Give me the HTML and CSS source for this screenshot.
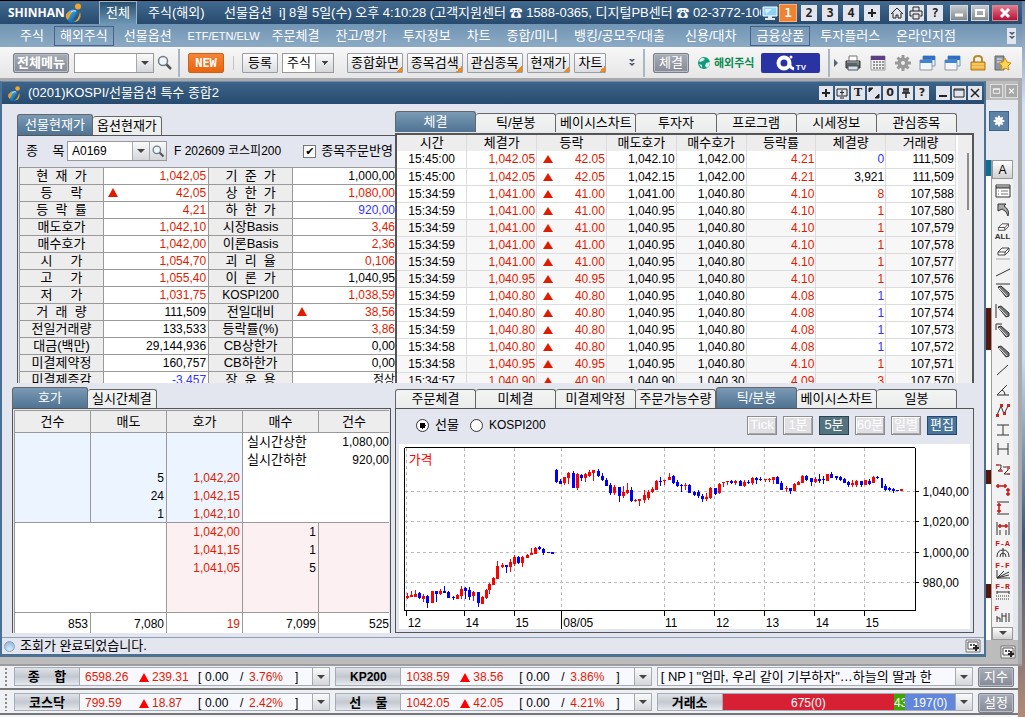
FILE: index.html
```html
<!DOCTYPE html>
<html lang="ko">
<head>
<meta charset="utf-8">
<title>SHINHAN i</title>
<link rel="stylesheet" href="styles.css">
</head>
<body>
<svg class="defs" aria-hidden="true">
  <defs>
    <linearGradient id="gBlue" x1="0" y1="0" x2="1" y2="1"><stop offset="0" stop-color="#7fd0f5"/><stop offset=".5" stop-color="#1e7fc4"/><stop offset="1" stop-color="#063a74"/></linearGradient>
    <symbol id="logo-i" viewBox="0 0 18 22">
      <circle cx="13" cy="4.500" r="3" fill="#f0a52c"/>
      <path d="M2 11Q6 6 11 8q3 1 1 4l-3 5q0 2 5 0-3 5-8 4-4-1-2-5l2-4q0-2-4-1z" fill="url(#gBlue)"/>
      <path d="M1 12q3-3 6-2l-4 8Q0 16 1 12zM15 10q2 5-2 9-2 1-5 1 5-1 7-10z" fill="#d9a63b"/>
      <path d="M6 10q3-2 5-1" stroke="#dff4ff" fill="none"/>
    </symbol>
    <symbol id="plus" viewBox="0 0 14 14"><path d="M7 3v8M3 7h8" stroke="#222" stroke-width="2"/></symbol>
    <symbol id="mag" viewBox="0 0 18 18"><circle cx="7" cy="7" r="4.500" fill="#eef6fb" stroke="#6d7a8a" stroke-width="1.500"/><path d="M10.500 10.500L15 15" stroke="#555" stroke-width="2.500"/></symbol>
    <symbol id="chev" viewBox="0 0 8 10"><path d="M1 1h2l1 1 1-1h2L4 4zM1 5h2l1 1 1-1h2L4 8z" fill="#41506a"/></symbol>
    <symbol id="min" viewBox="0 0 14 14"><path d="M3 10h8" stroke="#222" stroke-width="2"/></symbol>
    <symbol id="max" viewBox="0 0 14 14"><path d="M2 3h10v8H2zM2 4h10" stroke="#222" fill="none"/></symbol>
    <symbol id="close" viewBox="0 0 14 14"><path d="M3 3l8 8M11 3l-8 8" stroke="#222" stroke-width="1.500"/></symbol>
    <symbol id="printer" viewBox="0 0 18 18"><path d="M5 2h8v6H5z" fill="#fff" stroke="#777"/><path d="M2 7h14v7H2z" fill="#5b6268" stroke="#333"/><path d="M3 8h12" stroke="#aeb7bd"/><path d="M4 12h10v4H4z" fill="#cfe5f2" stroke="#555"/><path d="M13 10h2" stroke="#59d06c"/></symbol>
    <symbol id="wins" viewBox="0 0 18 18"><path d="M4 2h12v10H4z" fill="#e9f2fa" stroke="#7893b0"/><path d="M4 2h12v4H4z" fill="#2c6fc4"/><path d="M1 6h12v10H1z" fill="#f4f5f7" stroke="#8a97a6"/><path d="M1 6h12v3H1z" fill="#3d83d6"/></symbol>
    <symbol id="gear" viewBox="0 0 18 18"><g stroke="currentColor" stroke-width="3"><path d="M9 1v16M1 9h16M3.500 3.500l11 11M14.500 3.500l-11 11"/></g><circle cx="9" cy="9" r="5.500" fill="currentColor"/><circle class="hub" cx="9" cy="9" r="2"/></symbol>
    <symbol id="addwin" viewBox="0 0 16 14"><path d="M1 1h14v12H1z" fill="#eee" stroke="#777"/><path d="M3 3h10v7H3z" fill="#fff" stroke="#555"/><path d="M5 5h2v2H5zM8 5h2v2H8z" fill="#555"/><path d="M11 6v6M8 9h6" stroke="#222" stroke-width="2"/></symbol>
    <symbol id="pen" viewBox="0 0 16 16"><path d="M3 4l3-1 8 7v3l-3 1z" fill="#777" stroke="#333"/><path d="M4 5l8 8" stroke="#ddd"/></symbol>
  </defs>
</svg>

<div class="app">
  <header class="titlebar">
    <div class="brand"><strong>SHINHAN</strong><svg class="brand-i"><use href="#logo-i"/></svg></div>
    <button class="top-tab">전체</button>
    <a class="top-link" href="#">주식(해외)</a>
    <a class="top-link" href="#">선물옵션</a>
    <p class="notice">i] 8월 5일(수) 오후 4:10:28 (고객지원센터 ☎ 1588-0365, 디지털PB센터 ☎ 02-3772-1000</p>
    <svg class="monitor" viewBox="0 0 16 16"><path d="M1 2h14v9H1z" fill="#8fd2f7" stroke="#fff"/><path d="M3 4h7L4 9z" fill="#d8f1ff"/><path d="M6 11h4v2h3v2H3v-2h3z" fill="#dfe8ee"/></svg>
    <button class="sq on">1</button>
    <div class="sq-set"><button class="sq">2</button><button class="sq">3</button><button class="sq">4</button><button class="sq" aria-label="추가"><svg><use href="#plus"/></svg></button></div>
    <div class="sq-set tight"><button class="sq" aria-label="홈"><svg viewBox="0 0 14 14"><path d="M1 8l6-6 6 6M3 7v5h3V9h2v3h3V7" stroke="#222" fill="none"/></svg></button><button class="sq" aria-label="인쇄"><svg viewBox="0 0 14 14"><path d="M4 5V1h6v4M3 10H1V5h12v5h-2M4 8h6v5H4z" stroke="#222" fill="none"/></svg></button><button class="sq">?</button></div>
    <div class="win-set"><button class="wb" aria-label="최소화"><svg viewBox="0 0 14 14"><path d="M3 9h8" stroke="#fff" stroke-width="3"/></svg></button><button class="wb" aria-label="최대화"><svg viewBox="0 0 14 14"><path d="M3 4h8v6H3z" stroke="#fff" stroke-width="2" fill="none"/></svg></button><button class="wb red" aria-label="닫기"><svg viewBox="0 0 14 14"><path d="M3 3l8 8M11 3l-8 8" stroke="#fff" stroke-width="3"/></svg></button></div>
  </header>

  <nav class="menu">
    <a href="#">주식</a><a href="#" class="boxed">해외주식</a><a href="#">선물옵션</a><a href="#" class="latin">ETF/ETN/ELW</a><a href="#">주문체결</a><a href="#">잔고/평가</a><a href="#">투자정보</a><a href="#">차트</a><a href="#">종합/미니</a><a href="#">뱅킹/공모주/대출</a><a href="#" class="wide">신용/대차</a><a href="#" class="boxed">금융상품</a><a href="#">투자플러스</a><a href="#">온라인지점</a>
    <button class="more" aria-label="더보기"><svg><use href="#chev"/></svg></button>
  </nav>

  <div class="toolbar">
    <button class="dark strong">전체메뉴</button>
    <div class="combo menu-find"><input aria-label="화면번호"><button class="drop" aria-label="목록"></button></div>
    <button class="plain" aria-label="검색"><svg class="i18"><use href="#mag"/></svg></button>
    <i class="sep"></i>
    <button class="new">NEW</button>
    <i class="sep thin"></i>
    <button class="btn reg">등록</button>
    <select class="sel" aria-label="구분"><option>주식</option></select>
    <div class="quick"><button class="btn tick">종합화면</button><button class="btn tick">종목검색</button><button class="btn tick">관심종목</button><button class="btn tick">현재가</button><button class="btn tick">차트</button></div>
    <svg class="chev"><use href="#chev"/></svg>
    <i class="sep"></i>
    <button class="dark">체결</button>
    <a class="overseas" href="#"><svg viewBox="0 0 14 14"><circle cx="7" cy="7" r="6" fill="#0f9a78"/><path d="M3 3q3-2 5 0l-2 2-3 1-1-1zM9 7l4-1q0 4-3 6L8 10zM2 8l3 1v3z" fill="#d8f1ec"/></svg>해외주식</a>
    <a class="atv" href="#" aria-label="알파 TV"><svg viewBox="0 0 20 18"><circle cx="8" cy="9" r="5.500" fill="none" stroke="#fff" stroke-width="4"/><path d="M13 6q0 8 5 9" stroke="#fff" stroke-width="3" fill="none"/><circle cx="15" cy="3" r="1.500" fill="#fff"/></svg><b>TV</b></a>
    <i class="sep"></i>
    <svg class="arrow" viewBox="0 0 6 8"><path d="M1 0l4 4-4 4z" fill="#55647a"/></svg>
    <div class="icons">
      <svg><use href="#printer"/></svg>
      <svg viewBox="0 0 18 18"><path d="M2 2h14v14H2z" fill="#f2f2f6" stroke="#999"/><path d="M2 2h14v4H2z" fill="#5c3f86"/><path d="M4 8h2m1 0h2m1 0h2m1 0h2M4 11h2m1 0h2m1 0h2m1 0h2M4 14h2m1 0h2m1 0h2m1 0h2" stroke="#777" stroke-width="1.500"/></svg>
      <svg class="gray"><use href="#gear"/></svg>
      <svg><use href="#wins"/></svg>
      <svg><use href="#wins"/></svg>
      <svg viewBox="0 0 18 18"><path d="M5 9V5q0-3 4-3t4 3v4" stroke="#b9892b" stroke-width="2" fill="none"/><path d="M2 8h14v8H2z" fill="#f0b13c" stroke="#a9761a"/><path d="M3 10h12M3 13h12" stroke="#fbd98a"/></svg>
      <svg viewBox="0 0 18 18"><path d="M1 2h9v14H1z" fill="#8e969e" stroke="#666"/><path d="M3 5h5M3 8h4" stroke="#eee"/><path d="M11 4l2 4 4 1-3 3 1 4-4-2-4 2 1-4-3-3 4-1z" fill="#ffd451" stroke="#d08a18"/></svg>
    </div>
  </div>

  <div class="desktop">
    <section class="window">
      <div class="win-title"><svg class="wi"><use href="#logo-i"/></svg><h1>(0201)KOSPI/선물옵션 특수 종합2</h1>
        <div class="mini-set"><button aria-label="추가"><svg><use href="#plus"/></svg></button><button aria-label="화면"><svg viewBox="0 0 14 14"><path d="M2 3h10v7H2zM5 12h4M7 4v5M5 6.500h4" stroke="#222" fill="none"/></svg></button><button class="serif">T</button><button aria-label="크기"><svg viewBox="0 0 14 14"><path d="M2 2h4L2 6zM12 12H8l4-4z" fill="#222" stroke="#222"/></svg></button><button>0</button><button aria-label="고정"><svg viewBox="0 0 14 14"><path d="M4 3h6M7 3v9M3 7h8M5 3v4M9 3v4" stroke="#222" fill="none" stroke-width="1.500"/></svg></button><button>?</button></div>
        <div class="mini-set"><button aria-label="최소화"><svg><use href="#min"/></svg></button><button aria-label="최대화"><svg><use href="#max"/></svg></button><button aria-label="닫기"><svg><use href="#close"/></svg></button></div>
      </div>

      <div class="content">
        <section class="quote">
          <div class="tabs"><button class="tab on">선물현재가</button><button class="tab">옵션현재가</button></div>
          <div class="quote-box">
            <div class="finder">
              <label for="code">종    목</label>
              <div class="combo"><input id="code" value="A0169"><button class="drop" aria-label="목록"></button><button class="drop find" aria-label="검색"><svg><use href="#mag"/></svg></button></div>
              <span class="name">F 202609 코스피200</span>
              <label class="check"><input type="checkbox" checked>종목주문반영</label>
            </div>
            <table class="facts">
              <colgroup><col class="c1"><col class="c2"><col class="c1"><col class="c3"></colgroup>
              <tr><th>현  재  가</th><td class="r">1,042,05</td><th>기  준  가</th><td>1,000,00</td></tr>
              <tr><th>등     락</th><td class="r"><i class="up"></i>42,05</td><th>상  한  가</th><td class="r">1,080,00</td></tr>
              <tr><th>등  락  률</th><td class="r">4,21</td><th>하  한  가</th><td class="b">920,00</td></tr>
              <tr><th>매도호가</th><td class="r">1,042,10</td><th>시장Basis</th><td class="r">3,46</td></tr>
              <tr><th>매수호가</th><td class="r">1,042,00</td><th>이론Basis</th><td class="r">2,36</td></tr>
              <tr><th>시     가</th><td class="r">1,054,70</td><th>괴  리  율</th><td class="r">0,106</td></tr>
              <tr><th>고     가</th><td class="r">1,055,40</td><th>이  론  가</th><td>1,040,95</td></tr>
              <tr><th>저     가</th><td class="r">1,031,75</td><th class="n">KOSPI200</th><td class="r">1,038,59</td></tr>
              <tr><th>거  래  량</th><td>111,509</td><th>전일대비</th><td class="r"><i class="up"></i>38,56</td></tr>
              <tr><th>전일거래량</th><td>133,533</td><th>등락률(%)</th><td class="r">3,86</td></tr>
              <tr><th>대금(백만)</th><td>29,144,936</td><th>CB상한가</th><td>0,00</td></tr>
              <tr><th>미결제약정</th><td>160,757</td><th>CB하한가</th><td>0,00</td></tr>
              <tr><th>미결제증감</th><td class="b">-3,457</td><th>장  운  용</th><td>정상</td></tr>
            </table>
          </div>
        </section>

        <section class="trades">
          <div class="tabs even"><button class="tab on">체결</button><button class="tab">틱/분봉</button><button class="tab">베이시스차트</button><button class="tab">투자자</button><button class="tab">프로그램</button><button class="tab">시세정보</button><button class="tab">관심종목</button></div>
          <div class="trades-box">
            <table class="ticks">
              <thead><tr><th>시간</th><th>체결가</th><th>등락</th><th>매도호가</th><th>매수호가</th><th>등락률</th><th>체결량</th><th>거래량</th></tr></thead>
              <tbody id="ticks"></tbody>
            </table>
            <div class="scroll"><i></i></div>
          </div>
        </section>

        <section class="book">
          <div class="tabs"><button class="tab on">호가</button><button class="tab">실시간체결</button></div>
          <div class="book-box">
            <table class="depth">
              <thead><tr><th>건수</th><th>매도</th><th>호가</th><th>매수</th><th>건수</th></tr></thead>
              <tbody class="ask">
                <tr><td></td><td></td><td></td><td class="lbl">실시간상한</td><td>1,080,00</td></tr>
                <tr><td></td><td></td><td></td><td class="lbl">실시간하한</td><td>920,00</td></tr>
                <tr><td></td><td>5</td><td class="r">1,042,20</td><td></td><td></td></tr>
                <tr><td></td><td>24</td><td class="r">1,042,15</td><td></td><td></td></tr>
                <tr><td></td><td>1</td><td class="r">1,042,10</td><td></td><td></td></tr>
              </tbody>
              <tbody class="bid">
                <tr><td></td><td></td><td class="r">1,042,00</td><td>1</td><td></td></tr>
                <tr><td></td><td></td><td class="r">1,041,15</td><td>1</td><td></td></tr>
                <tr><td></td><td></td><td class="r">1,041,05</td><td>5</td><td></td></tr>
                <tr><td></td><td></td><td></td><td></td><td></td></tr>
                <tr><td></td><td></td><td></td><td></td><td></td></tr>
              </tbody>
              <tfoot><tr><td>853</td><td>7,080</td><td class="r">19</td><td>7,099</td><td>525</td></tr></tfoot>
            </table>
          </div>
        </section>

        <section class="chart">
          <div class="tabs even"><button class="tab">주문체결</button><button class="tab">미체결</button><button class="tab">미결제약정</button><button class="tab">주문가능수량</button><button class="tab on">틱/분봉</button><button class="tab">베이시스차트</button><button class="tab">일봉</button></div>
          <div class="chart-box">
            <div class="chart-tools">
              <label><input type="radio" name="src" checked>선물</label>
              <label class="n"><input type="radio" name="src">KOSPI200</label>
              <div class="periods"><button disabled>Tick</button><button disabled>1분</button><button class="cur">5분</button><button disabled>60분</button><button disabled>일별</button><button class="edit">편집</button></div>
            </div>
            <svg class="plot" viewBox="0 0 571 185" role="img" aria-label="5분봉 가격">
              <path class="grid" d="M5 48H517M5 78H517M5 109H517M5 139H517M7 4V167M65 4V167M115 4V167M162 4V167M265 4V167M316 4V167M366 4V167M416 4V167M466 4V167"/>
              <g id="candles"></g>
              <path class="axis" d="M5 4H517V167H5ZM517 48h4M517 78h4M517 109h4M517 139h4M7 167v5M65 167v5M115 167v5M162 167v18M265 167v5M316 167v5M366 167v5M416 167v5M466 167v5"/>
              <text class="title" x="9" y="20">가격</text>
              <text x="524" y="52">1,040,00</text><text x="524" y="82">1,020,00</text><text x="524" y="113">1,000,00</text><text x="524" y="143">980,00</text>
              <text x="8" y="183">12</text><text x="66" y="183">14</text><text x="116" y="183">15</text><text x="164" y="183">08/05</text><text x="266" y="183">11</text><text x="317" y="183">12</text><text x="367" y="183">13</text><text x="417" y="183">14</text><text x="467" y="183">15</text>
            </svg>
          </div>
        </section>
      </div>

      <footer class="status"><i class="orb"></i><span>조회가 완료되었습니다.</span><svg><use href="#addwin"/></svg></footer>
    </section>

    <aside class="behind">
      <div class="behind-title"><button aria-label="최대화"><svg viewBox="0 0 14 14"><path d="M3 4h8v6H3zM3 5h8" stroke="#fff" fill="none"/></svg></button><button aria-label="닫기"><svg viewBox="0 0 14 14"><path d="M4 4l6 6M10 4l-6 6" stroke="#fff" stroke-width="1.500"/></svg></button></div>
      <button class="setup" aria-label="설정"><svg><use href="#gear"/></svg></button>
      <div class="palette-row">
        <div class="sliver"></div>
        <div class="palette">
          <button class="a">A</button>
          <svg viewBox="0 0 16 16"><path d="M1 2h14v12H1zM1 5h14M1 4h14" stroke="#333" fill="#fff"/><path d="M3 8h1m2 0h7M3 11h1m2 0h7" stroke="#777"/></svg>
          <svg viewBox="0 0 16 16"><path d="M3 9V2h8L9 4q6 4 4 10-1-5-6-7z" fill="#aaa" stroke="#333"/></svg>
          <div class="all"><svg viewBox="0 0 16 12"><path d="M3 6l4-4h7l-4 4zM3 6v3h7l4-4V2M10 6v3" fill="#fff" stroke="#444"/></svg><b>ALL</b></div>
          <svg viewBox="0 0 16 16"><path d="M3 8l4-4h7l-4 4zM3 8v3h7l4-4V4M10 8v3" fill="#fff" stroke="#444"/><path d="M1 15h14" stroke="#aaa"/></svg>
          <svg viewBox="0 0 16 16"><path d="M1 12L15 5" stroke="#333"/></svg>
          <svg viewBox="0 0 16 16"><use href="#pen"/><path d="M1 1h14" stroke="#333"/></svg>
          <svg viewBox="0 0 16 16"><use href="#pen"/><path d="M1 1v14" stroke="#333"/></svg>
          <svg viewBox="0 0 16 16"><use href="#pen"/><path d="M1 1h6M1 1v6" stroke="#333"/></svg>
          <svg viewBox="0 0 16 16"><use href="#pen"/></svg>
          <svg viewBox="0 0 16 16"><path d="M2 13L13 3" stroke="#333"/></svg>
          <svg viewBox="0 0 16 16"><path d="M12 3L2 13h12M7 8q3 1 3 5" stroke="#333" fill="none"/></svg>
          <svg viewBox="0 0 16 16"><path d="M2 13L6 4l3 8 5-10" stroke="#333" fill="none"/><path d="M1 12h3v3H1zM5 2h3v3H5zM8 10h3v3H8zM12 2h3v3h-3z" fill="#c22"/></svg>
          <svg viewBox="0 0 16 16"><path d="M2 3h12M2 13h12M8 3v10" stroke="#333"/></svg>
          <svg viewBox="0 0 16 16"><path d="M3 2v12M13 2v12M3 8h10" stroke="#333"/></svg>
          <svg viewBox="0 0 16 16"><path d="M2 4h4v3L3 10h5M8 6h5v3l-4 4h5" stroke="#333" fill="none"/><path d="M1 3h3v2H1zM4 8h3v3H4zM12 5h3v3h-3zM12 12h3v2h-3z" fill="#c55"/></svg>
          <svg viewBox="0 0 16 16"><path d="M1 5h11M3 3v4M10 3v4M13 7v8M11 9h4M11 13h4" stroke="#c11" stroke-width="1.500"/></svg>
          <svg viewBox="0 0 16 16"><path d="M2 2h12M2 14h12" stroke="#333"/><path d="M4 3v10M2 5h4M2 11h4" stroke="#c11" stroke-width="1.500"/></svg>
          <svg viewBox="0 0 16 16"><path d="M2 2v13M14 2v13M5 10v5M11 10v5" stroke="#333"/><path d="M3 6h10M5 4v4M11 4v4" stroke="#c11" stroke-width="1.500"/></svg>
          <div class="f"><b>F-A</b><svg viewBox="0 0 16 9"><path d="M2 9q0-7 6-7t6 7M5 9q0-4 3-4t3 4M8 0v9" stroke="#333" fill="none"/></svg></div>
          <div class="f"><b>F-F</b><svg viewBox="0 0 16 9"><path d="M2 0v8h13M2 8L9 1M2 8l12-6M2 8l12-3" stroke="#333" fill="none"/></svg></div>
          <div class="f"><b>F-R</b><svg viewBox="0 0 16 9"><path d="M2 1h12M2 0v3M14 0v3" stroke="#333"/><path d="M1 5h14M1 8h14" stroke="#333" stroke-dasharray="1 1"/></svg></div>
          <div class="f"><b>F</b><svg viewBox="0 0 16 9"><path d="M2 3v6M2 5h3v4M7 0v9M7 3h4M11 0v9M14 0v9" stroke="#333" fill="none"/></svg></div>
          <button class="drop" aria-label="아래로"></button>
        </div>
      </div>
      <div class="behind-foot"><svg><use href="#addwin"/></svg></div>
    </aside>
  </div>

  <footer class="ticker">
    <div class="line">
      <i class="grip"></i>
      <div class="cell"><b>종    합</b><p class="vals"><span class="r">6598.26</span><i class="up"></i><span class="r">239.31</span><span>[</span><span>0.00</span><span>/</span><span class="r">3.76%</span><span>]</span></p><button class="drop" aria-label="목록"></button></div>
      <div class="cell"><b class="n">KP200</b><p class="vals"><span class="r">1038.59</span><i class="up"></i><span class="r">38.56</span><span>[</span><span>0.00</span><span>/</span><span class="r">3.86%</span><span>]</span></p><button class="drop" aria-label="목록"></button></div>
      <div class="cell"><p class="news">[ NP ] "엄마, 우리 같이 기부하자"…하늘의 딸과 한</p><button class="drop" aria-label="목록"></button></div>
      <button class="dark">지수</button>
    </div>
    <div class="line">
      <i class="grip"></i>
      <div class="cell"><b>코스닥</b><p class="vals"><span class="r">799.59</span><i class="up"></i><span class="r">18.87</span><span>[</span><span>0.00</span><span>/</span><span class="r">2.42%</span><span>]</span></p><button class="drop" aria-label="목록"></button></div>
      <div class="cell"><b>선    물</b><p class="vals"><span class="r">1042.05</span><i class="up"></i><span class="r">42.05</span><span>[</span><span>0.00</span><span>/</span><span class="r">4.21%</span><span>]</span></p><button class="drop" aria-label="목록"></button></div>
      <div class="cell"><b>거래소</b><p class="bar"><span class="rise" style="flex-grow:675">675(0)</span><span class="flat" style="flex-grow:43">43</span><span class="fall" style="flex-grow:197">197(0)</span></p><button class="drop" aria-label="목록"></button></div>
      <button class="dark">설정</button>
    </div>
  </footer>
</div>
<script src="app.js"></script>
</body>
</html>
```
FILE: app.js
```js
// time, price, change, ask, bid, rate, volume, volume colour, total
const ticks = [
  ["15:45:00", "1,042.05", "42.05", "1,042.10", "1,042.00", "4.21", "0", "b", "111,509"],
  ["15:45:00", "1,042.05", "42.05", "1,042.15", "1,042.00", "4.21", "3,921", "", "111,509"],
  ["15:34:59", "1,041.00", "41.00", "1,041.00", "1,040.80", "4.10", "8", "r", "107,588"],
  ["15:34:59", "1,041.00", "41.00", "1,040.95", "1,040.80", "4.10", "1", "r", "107,580"],
  ["15:34:59", "1,041.00", "41.00", "1,040.95", "1,040.80", "4.10", "1", "r", "107,579"],
  ["15:34:59", "1,041.00", "41.00", "1,040.95", "1,040.80", "4.10", "1", "r", "107,578"],
  ["15:34:59", "1,041.00", "41.00", "1,040.95", "1,040.80", "4.10", "1", "r", "107,577"],
  ["15:34:59", "1,040.95", "40.95", "1,040.95", "1,040.80", "4.10", "1", "r", "107,576"],
  ["15:34:59", "1,040.80", "40.80", "1,040.95", "1,040.80", "4.08", "1", "b", "107,575"],
  ["15:34:59", "1,040.80", "40.80", "1,040.95", "1,040.80", "4.08", "1", "b", "107,574"],
  ["15:34:59", "1,040.80", "40.80", "1,040.95", "1,040.80", "4.08", "1", "b", "107,573"],
  ["15:34:58", "1,040.80", "40.80", "1,040.95", "1,040.80", "4.08", "1", "b", "107,572"],
  ["15:34:58", "1,040.95", "40.95", "1,040.95", "1,040.80", "4.10", "1", "r", "107,571"],
  ["15:34:57", "1,040.90", "40.90", "1,040.90", "1,040.30", "4.09", "3", "r", "107,570"]
];
document.getElementById("ticks").innerHTML = ticks.map(t =>
  `<tr><td class="c">${t[0]}</td><td class="r">${t[1]}</td><td class="r"><i class="up"></i>${t[2]}</td><td>${t[3]}</td><td>${t[4]}</td><td class="r">${t[5]}</td><td class="${t[7]}">${t[6]}</td><td>${t[8]}</td></tr>`
).join("");

// x, wick top, wick bottom, body top, body bottom; u = rising, d = falling
const candles = `7 149 155 152 154 u;11 147 153 151 153 u;15 146 153 150 153 u;19 148 155 149 154 d;23 150 158 152 155 u;27 151 164 152 159 d;32 147 159 147 159 u;36 147 158 147 150 d;40 145 151 147 150 u;44 142 149 147 149 d;48 147 154 148 154 d;53 152 156 153 154 d;57 150 155 151 155 u;61 142 155 145 152 u;65 143 155 144 147 d;69 143 156 146 153 d;73 147 157 148 152 u;78 148 163 148 159 d;82 152 160 153 160 u;86 145 155 146 154 u;90 139 150 140 146 u;94 133 141 134 141 u;98 117 135 122 135 u;103 119 124 121 123 u;107 121 129 121 123 d;111 115 128 118 123 u;115 111 122 113 120 u;119 112 120 113 119 d;123 112 123 113 119 u;128 110 114 111 114 u;132 104 111 109 111 u;136 103 110 104 110 u;140 102 106 103 105 d;144 104 111 105 109 d;149 108 109 108 109 d;153 108 110 108 110 d;157 25 39 26 38 d;161 35 40 37 40 d;165 33 41 33 39 u;169 28 40 29 34 u;174 27 44 29 44 d;178 29 46 30 44 u;182 30 37 31 34 d;186 29 38 30 34 u;190 26 33 28 32 u;194 26 37 26 29 u;199 25 33 27 32 d;203 29 37 32 36 d;207 34 42 36 42 d;211 39 51 41 49 d;215 41 51 43 49 u;220 43 58 43 52 d;224 42 54 48 52 u;228 39 50 46 49 u;232 43 58 46 57 d;236 55 58 56 57 u;240 55 62 55 57 u;245 46 59 51 56 u;249 46 56 48 54 u;253 43 49 45 48 u;257 36 46 37 46 u;261 33 42 37 38 d;265 36 41 36 37 u;270 29 36 33 36 u;274 31 40 32 39 d;278 36 43 38 42 d;282 40 48 41 42 d;286 39 46 41 42 u;290 40 49 41 49 d;295 47 52 48 51 d;299 46 54 48 52 d;303 50 58 52 55 d;307 49 57 53 55 u;311 43 55 44 54 u;316 44 51 44 50 d;320 39 50 40 49 u;324 38 43 38 39 u;328 37 41 37 38 u;332 36 40 37 39 d;336 36 41 37 39 u;341 36 42 37 42 d;345 36 43 38 42 u;349 36 40 38 39 d;353 33 41 34 39 u;357 33 40 34 36 d;361 33 37 35 36 d;366 35 38 35 36 u;370 34 38 35 36 u;374 33 40 33 36 u;378 32 40 33 40 d;382 37 46 39 46 d;387 42 48 44 45 u;391 44 50 44 47 d;395 39 47 40 47 u;399 37 41 38 41 u;403 31 39 32 39 u;407 31 37 32 36 d;412 34 42 34 38 d;416 33 39 35 38 u;420 30 39 35 37 d;424 32 40 35 36 d;428 30 37 30 37 u;432 28 34 30 34 d;437 32 36 32 34 d;441 32 37 33 36 d;445 34 39 35 39 d;449 37 43 38 41 d;453 36 43 39 41 u;457 36 43 37 41 u;462 37 43 37 41 d;466 36 41 36 41 u;470 35 41 37 40 d;474 32 39 33 39 u;478 32 35 33 34 d;483 34 44 34 44 d;487 40 47 42 46 d;491 43 47 44 46 d;495 44 49 45 47 d;499 46 47 46 47 d;503 45 47 45 47 u`;
document.getElementById("candles").innerHTML = candles.split(";").map(c => {
  const [x, hi, lo, top, bottom, dir] = c.split(" ");
  return `<path class="${dir}" d="M${x} ${hi}h1V${lo}h-1zM${x - 1} ${top}h3V${bottom}h-3z"/>`;
}).join("");
```
FILE: styles.css
```css
* { box-sizing: border-box; }
body {
  margin: 0; height: 100vh; overflow: hidden; color: #000;
  font: 13px/16px "Liberation Sans", "Noto Sans CJK KR", sans-serif;
  background: linear-gradient(#6a7f9b, #d5e2f2 15%, #c9daf0 50%, #3f5675 75%, #b28b78);
}
button, input, select { font: inherit; color: inherit; margin: 0; padding: 0; border-radius: 0; }
button { white-space: nowrap; }
a { color: inherit; text-decoration: none; }
p, h1 { margin: 0; font-weight: normal; font-size: inherit; }
svg { display: block; flex: none; }
.defs { position: absolute; width: 0; height: 0; }
.r { color: #e11b00; }
.b { color: #3333ff; }
.n { font-size: 12px; }
.up { display: inline-block; border: 5px solid transparent; border-top: 0; border-bottom: 9px solid #e11b00; }

.app { height: 100vh; display: flex; flex-direction: column; padding-right: 3px; border-top: 1px solid #000; }

/* title bar */
.titlebar { display: flex; align-items: center; height: 23px; flex: none; padding: 0 4px 0 8px; background: linear-gradient(#426a90, #274a6d); color: #fff; }
.brand { display: flex; align-items: center; width: 91px; flex: none; }
.brand strong { font: bold 12px/16px "Open Sans", sans-serif; }
.brand-i { width: 18px; height: 22px; }
.top-tab { align-self: stretch; width: 38px; margin-right: 11px; border: 1px solid #9db4c8; border-bottom: 0; background: linear-gradient(#28506f, #6d97b4); flex: none; }
.top-link { width: 76px; flex: none; }
.top-link + .top-link { width: 55px; }
.notice { flex: 1; overflow: hidden; white-space: nowrap; min-width: 0; }
.monitor { width: 18px; height: 16px; }
.sq { width: 16px; height: 16px; border: 0; background: #e2e5ec; color: #222; font: bold 12px/16px "DejaVu Sans Mono", monospace; display: grid; place-items: center; }
.sq svg { width: 14px; height: 14px; }
.sq.on { width: 18px; height: 18px; background: #f08234; color: #fff; border: 1px solid #ffb070; margin-right: 4px; }
.sq-set { display: flex; gap: 5px; margin-right: 9px; }
.sq-set.tight { gap: 3px; margin-right: 7px; }
.win-set { display: flex; gap: 3px; }
.wb { width: 18px; height: 16px; border: 1px solid #d5d9dd; background: linear-gradient(#c6c9cc, #85898d); display: grid; place-items: center; }
.wb svg { width: 14px; height: 14px; }
.wb.red { width: 26px; background: linear-gradient(#e0798c, #b5133a); border-color: #d88; }

/* menu */
.menu { display: flex; align-items: center; gap: 4px; height: 23px; flex: none; padding: 0 6px 0 14px; color: #fff; background: linear-gradient(#7195b4, #8caac4); }
.menu a { padding: 1px 5px; border: 1px solid transparent; white-space: nowrap; }
.menu .latin { font-size: 11px; padding-right: 1px; }
.menu .wide { padding: 1px 9px; }
.menu .boxed { border-color: #45628a; }
.more { margin-left: auto; width: 9px; height: 16px; border: 0; background: #e3e6ef; display: grid; place-items: center; }
.more svg, .chev { width: 8px; height: 10px; }

/* toolbar */
.toolbar { display: flex; align-items: center; height: 34px; flex: none; padding: 0 10px 0 13px; background: linear-gradient(#f7f7f7, #e6e6e6); border-bottom: 3px solid #a9a9ac; white-space: nowrap; }
.toolbar > * { flex: none; }
.dark { height: 20px; width: 36px; border: 1px solid #79808c; border-radius: 2px; color: #fff; background: linear-gradient(#a8acb6, #858b97); box-shadow: inset 0 0 0 1px #b9bdc6; }
.dark.strong { width: 56px; font-weight: bold; margin-right: 5px; }
.combo { display: flex; height: 20px; border: 1px solid #999; background: #fff; }
.combo input { flex: 1; min-width: 0; border: 0; background: none; padding-left: 4px; font-size: 12px; }
.drop { width: 17px; flex: none; border: 0; border-left: 1px solid #a5a9b0; display: grid; place-items: center; background: linear-gradient(#fafafa, #d4d6da); }
.drop:empty::before { content: ""; border: 4px solid transparent; border-top: 4px solid #444; border-bottom: 0; }
.menu-find { width: 80px; }
.plain { border: 0; background: none; margin: 0 4px 0 2px; }
.i18 { width: 18px; height: 18px; }
.sep { width: 2px; height: 28px; background: #a9b7c4; margin-right: 8px; }
.sep.thin { width: 1px; height: 14px; background: #c4c4c4; margin: 0 8px 0 9px; }
.new { width: 36px; height: 20px; border: 1px solid #d35f10; border-radius: 2px; background: linear-gradient(#f4843a, #e9640f); color: #fff; font: bold 12px/16px "DejaVu Sans Mono", monospace; }
.btn { height: 20px; padding: 0 3px; border: 1px solid #9a9ea6; border-radius: 1px; background: linear-gradient(#fdfdfd, #dcdde0); }
.btn.reg { width: 36px; margin-right: 4px; }
.sel { width: 52px; height: 20px; margin-right: 13px; padding-left: 4px; border: 1px solid #999; appearance: none; background: linear-gradient(225deg, transparent 50%, #444 50%) right 4px top 7px / 4px 4px no-repeat, linear-gradient(135deg, transparent 50%, #444 50%) right 8px top 7px / 4px 4px no-repeat, linear-gradient(#a5a9b0, #a5a9b0) right 17px top / 1px 100% no-repeat, linear-gradient(#fafafa, #d4d6da) right / 17px 100% no-repeat, #fff; }
.sel { background-image: linear-gradient(135deg, #444 50%, transparent 50%), linear-gradient(225deg, #444 50%, transparent 50%), linear-gradient(#a5a9b0, #a5a9b0), linear-gradient(#fafafa, #d4d6da); }
.quick { display: flex; gap: 4px; width: 281px; }
.tick { background: linear-gradient(135deg, transparent 50%, #ee8a1d 50%) right bottom / 6px 6px no-repeat, linear-gradient(#fdfdfd, #dcdde0); }
.chev { margin-right: 7px; }
.overseas { display: flex; align-items: center; gap: 3px; margin: 0 11px 0 8px; color: #0c8a50; font-weight: bold; font-size: 11px; }
.overseas svg { width: 14px; height: 14px; }
.atv { width: 59px; height: 20px; margin-right: 8px; display: flex; align-items: center; justify-content: center; border-radius: 2px; background: #2a33a4; color: #fff; font-size: 8px; }
.atv svg { width: 20px; height: 18px; }
.atv b { align-self: flex-end; line-height: 10px; }
.atv + .sep { margin-right: 3px; }
.atv { margin-left: -4px; }
.arrow { width: 6px; height: 8px; margin-right: 5px; }
.icons { display: flex; gap: 7px; }
.icons svg { width: 18px; height: 18px; }
.icons .gray { color: #999; }
.hub { fill: #eee; }

/* workspace */
.desktop { flex: 1; min-height: 0; display: flex; background: #bcbcbc; border-bottom: 2px solid #9b9ba0; padding-bottom: 7px; }
.window { flex: 1; min-width: 0; display: flex; flex-direction: column; background: #e3e6ef; border: 2px solid #4a7093; border-bottom-width: 3px; border-top: 1px solid #6c8aa6; }
.win-title { display: flex; align-items: center; flex: none; height: 22px; padding: 0 2px 0 5px; color: #fff; background: linear-gradient(#3d6489, #274b6e); }
.win-title h1 { flex: 1; }
.wi { width: 15px; height: 17px; margin-right: 6px; }
.mini-set { display: flex; gap: 2px; margin-left: 7px; }
.mini-set button { width: 14px; height: 14px; border: 0; background: #e2e5ec; color: #222; font: bold 11px/14px "DejaVu Sans", sans-serif; display: grid; place-items: center; }
.mini-set .serif { font-family: "DejaVu Serif", serif; }
.mini-set svg { width: 14px; height: 14px; }
.content { flex: 1; min-height: 0; display: grid; grid-template: minmax(0, 280fr) minmax(0, 250fr) / minmax(0, 383fr) minmax(0, 579fr); padding: 0 10px 4px; }
.content > section { display: flex; flex-direction: column; min-width: 0; min-height: 0; overflow: hidden; }

.tabs { display: flex; align-items: flex-end; flex: none; height: 21px; }
.tab { height: 19px; border: 1px solid #666; border-bottom: 0; border-left-width: 0; border-radius: 3px 3px 0 0; background: linear-gradient(#f2f3f3, #ebecec); padding: 0 4px; }
.tab.on { height: 21px; width: 76px; padding: 0; border-left-width: 1px; color: #fff; background: linear-gradient(#7a9ab5, #4f7392); }
.tab:first-child { border-left-width: 1px; }
.even { padding-right: 17px; }
.even .tab { flex: 1 1 0; padding: 0; }

.quote { padding: 10px 0 0 5px; }
.quote-box { flex: 1; min-height: 0; border: solid #555; border-width: 1px 0 0 1px; padding: 5px 0 0 1px; overflow: hidden; }
.finder { display: flex; align-items: center; height: 20px; margin-bottom: 6px; padding: 0 2px 0 7px; white-space: pre; }
.finder > label:first-child { width: 41px; }
.finder .combo { width: 100px; margin-right: 7px; }
.find svg { width: 15px; height: 15px; }
.name { flex: 1; font-size: 12px; }
.check { display: flex; align-items: center; gap: 5px; }
.check input { appearance: none; width: 13px; height: 13px; border: 1px solid #777; background: #fff; }
.check input:checked::before { content: "✔"; display: block; font: 11px/11px "DejaVu Sans", sans-serif; text-align: center; }

table { border-collapse: collapse; table-layout: fixed; width: 100%; }
th { font-weight: normal; background: #ededed; padding: 0; white-space: pre; }
td { text-align: right; padding: 0 2px; font-size: 12px; white-space: nowrap; }
.facts { line-height: 16px; }
.facts th, .facts td { height: 17px; border: 1px solid #999; }
.facts td { background: #fff; }
.facts td:last-child { padding-right: 0; border-right: 0; }
.facts .c1 { width: 84px; }
.facts .c2 { width: 28%; }
.facts .c3 { width: auto; }
.facts .up { float: left; margin: 3px 0 0 2px; }

.trades { padding-top: 7px; }
.trades-box { flex: 1; min-height: 0; display: flex; align-items: stretch; margin-top: 1px; border: 1px solid #555; border-bottom: 0; border-width: 2px 2px 0; background: #fff; overflow: hidden; }
.ticks { flex: 1; align-self: flex-start; }
.ticks th, .ticks td { height: 17px; border-right: 1px solid #dcdcdc; line-height: 16px; }
.ticks th { height: 16px; }
.ticks td { border-bottom: 1px solid #dcdcdc; padding: 0 1px; }
.ticks .c { text-align: center; }
.ticks .up { float: left; margin: 4px 0 0 5px; border-width: 0 5px 8px; }
.ticks tr:nth-child(8n+5) td, .ticks tr:nth-child(8n+6) td, .ticks tr:nth-child(8n+7) td, .ticks tr:nth-child(8n+8) td { background: #f7f7f7; }
.scroll { width: 16px; flex: none; padding: 18px 0 0 11px; background: linear-gradient(90deg, #fff 2px, #eee 2px); }
.scroll i { display: block; width: 2px; height: 57px; background: #8d8d8d; }

.book { padding: 4px 4px 0 0; }
.book-box { flex: 1; min-height: 0; border: solid #555; border-width: 1px 1px 0; padding: 1px 1px 0; overflow: hidden; background: #e3e6ef; }
.depth th, .depth td { border: solid #999; border-width: 0 1px; height: 18px; line-height: 16px; }
.depth td { background: #fff; }
.depth thead th { height: 22px; border-width: 1px; width: 76px; }
.depth thead th:last-child { width: auto; }
.depth tr > :last-child { border-right: 0; }
.depth .ask td:nth-child(-n+3) { background: #ebf4ff; }
.depth .ask td:nth-child(5), .depth .bid td:nth-child(2) { border-left: 0; }
.depth .ask td:nth-child(4), .depth .bid td:nth-child(1) { border-right: 0; }
.depth .bid td:nth-child(n+3) { background: #fdf0f2; }
.depth .bid, .depth tfoot { border-top: 1px solid #999; }
.depth tfoot td { height: 21px; }
.depth td.lbl { text-align: left; padding-left: 4px; font-size: 13px; }
.depth td:last-child { padding-right: 0; }

.chart { padding-top: 4px; }
.chart-box { flex: 1; min-height: 0; display: flex; flex-direction: column; border: 1px solid #555; padding: 0 3px 3px; }
.chart-tools { display: flex; align-items: center; flex: none; height: 35px; padding: 0 13px 3px 17px; gap: 11px; }
.chart-tools label { display: flex; align-items: center; gap: 6px; }
.chart-tools input { appearance: none; width: 13px; height: 13px; border: 1px solid #333; border-radius: 50%; background: #fff; }
.chart-tools input:checked { background: radial-gradient(circle, #000 3px, #fff 3px); }
.periods { margin-left: auto; display: flex; gap: 6px; color: #fff; }
.periods button { width: 30px; height: 19px; border: 1px solid #8c8c8c; background: #e0e0e4; color: #fff; box-shadow: inset 1px 1px #fff, inset -1px -1px #aaa; }
.periods .cur { background: #55727f; border-color: #2c4450; box-shadow: none; }
.periods .edit { background: #47759b; border-color: #26466b; box-shadow: none; }
.plot { flex: 1; min-height: 0; width: 100%; background: #fff; font-size: 12px; }
.grid, .axis { fill: none; stroke: #bbb; stroke-dasharray: 3 3; shape-rendering: crispEdges; }
.axis { stroke: #000; stroke-dasharray: none; }
.u { fill: #f00; shape-rendering: crispEdges; }
.d { fill: #00f; shape-rendering: crispEdges; }
.title { fill: #f00; font-size: 13px; }

.status { display: flex; align-items: center; flex: none; height: 17px; border-top: 1px solid #8ba0b6; padding: 0 3px 0 2px; }
.status span { flex: 1; }
.status svg, .behind-foot svg { width: 16px; height: 14px; }
.orb { width: 11px; height: 11px; margin-right: 5px; border-radius: 50%; border: 1px solid #86a5c8; background: radial-gradient(circle at 50% 80%, #d8ecfb, #86aed6); }

.behind { width: 36px; flex: none; display: flex; flex-direction: column; background: #e6e8f0; border-right: 4px solid #a9aaae; margin-bottom: -7px; }
.behind-title { display: flex; gap: 2px; padding: 3px 0 2px 4px; background: #bcbcbc; margin-bottom: 11px; flex: none; }
.behind-title button { width: 13px; height: 14px; padding: 0; border: 1px solid #ddd; background: #a8a8a8; }
.behind-title svg { width: 11px; height: 12px; }
.setup { width: 20px; height: 20px; margin: 0 0 29px 3px; border: 1px solid #3c6389; background: #5c82a6; color: #fff; display: grid; place-items: center; flex: none; }
.setup svg { width: 12px; height: 12px; }
.palette-row { flex: 1; min-height: 0; display: flex; }
.sliver { width: 6px; background: linear-gradient(#0d6d91 16px, #fff 0 148px, #5a1408 0 190px, #fff 0 310px, #5a1408 0 324px, #fff 0 424px, #5a1408 0 438px, #fff 0); border-right: 1px solid #999; }
.palette { width: 21px; display: flex; flex-direction: column; align-items: center; justify-content: space-between; background: #f2f2f2; }
.palette svg { width: 16px; height: 16px; }
.palette button { width: 21px; height: 19px; border: 1px solid #999; background: linear-gradient(#fff, #d0d0d0); font-size: 12px; }
.all, .f { display: flex; flex-direction: column; align-items: center; height: 18px; font-size: 8px; line-height: 7px; color: #333; }
.all svg, .f svg { height: 11px; }
.f { color: #c11; font-family: "Liberation Mono", monospace; }
.f:nth-last-child(2) b { align-self: flex-start; }
.palette .drop { height: 13px; }
.behind-foot { flex: none; display: grid; place-items: center end; height: 24px; padding-right: 2px; background: #bcbcbc; }

/* ticker */
.ticker { flex: none; margin-right: 4px; background: #f4f5f8; padding-bottom: 2px; }
.line { display: flex; gap: 5px; height: 25px; padding: 3px 4px 2px; border-bottom: 2px solid #777; background: #eef0f4; }
.line:first-child { padding-top: 1px; height: 24px; }
.grip { width: 5px; flex: none; background: radial-gradient(circle, #888 1px, transparent 1px) 0 0 / 4px 4px; }
.cell { flex: 1 1 0; min-width: 0; display: flex; border: 1px solid #a4acb8; background: #f8f8ff; line-height: 18px; }
.cell b { width: 65px; flex: none; text-align: center; white-space: pre; background: linear-gradient(#dfe2e8, #c3c8d0 50%, #e6e9ee); border-right: 1px solid #a4acb8; }
.cell p { flex: 1; min-width: 0; overflow: hidden; white-space: nowrap; }
.vals { display: grid; grid-template-columns: 54px 13px 46px 7px 35px 9px 46px auto; align-items: center; padding-left: 5px; font-size: 12px; }
.vals .up { justify-self: start; border-bottom-color: #f00; }
.news { padding-left: 3px; }
.bar { display: flex; color: #fff; }
.bar span { flex-basis: 0; min-width: 0; text-align: center; overflow: hidden; font-size: 12px; }
.rise { background: #d72033; }
.flat { background: #3fa600; }
.fall { background: #6286dc; }
```
